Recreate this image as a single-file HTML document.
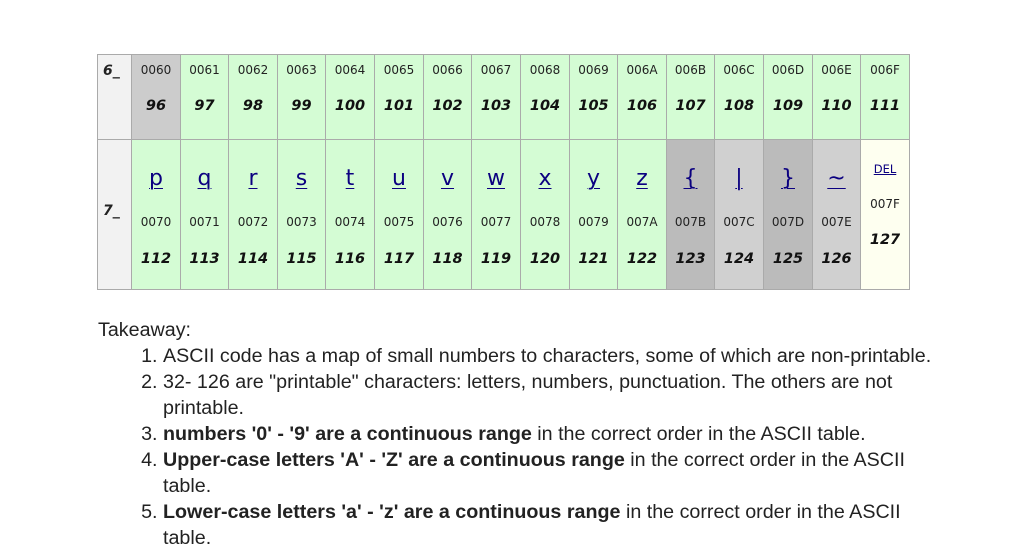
<!DOCTYPE html>
<html><head><meta charset="utf-8"><style>
body{margin:0;background:#fff;width:1033px;height:560px;overflow:hidden;position:relative;font-family:"Liberation Sans",Arial,sans-serif}
.cell{position:absolute;box-sizing:border-box;border:1px solid #aaa;background:#d4fcd4;text-align:center;font-family:"DejaVu Sans",Verdana,sans-serif;color:#222;display:flex;flex-direction:column;align-items:stretch}
.cell span{display:block}
.r1{top:54px;height:86px}
.r2{top:139px;height:151px}
.h{background:#f2f2f2;text-align:left;padding-left:5px;font-weight:bold;font-style:italic;font-size:14px;left:97px;width:35px}
.c{font-size:12px;line-height:16px}
.n{font-size:14.5px;font-weight:bold;font-style:oblique;line-height:18px;color:#111}
.r1 .c{margin-top:7px}
.r1 .n{margin-top:19px}
.l{margin-top:25px;line-height:28px;font-size:22px;color:#0b0080;text-decoration:underline;text-decoration-thickness:1px;text-underline-offset:3px}
.r2 .c{margin-top:21px}
.r2 .n{margin-top:20px}
.g1{background:#ccc}.g2{background:#bbb}.g3{background:#d0d0d0}.y{background:#fefff0}
.del{margin-top:22px;font-size:11.5px;line-height:14px;color:#0b0080;text-decoration:underline}
.txt{position:absolute;left:98px;top:317px;font-size:19.7px;line-height:26px;color:#222;width:930px;white-space:nowrap}
ol{margin:0;padding-left:65px}
</style></head><body>
<div class="cell r1 h" style="padding-top:8px">6_</div>
<div class="cell r2 h" style="padding-top:63px">7_</div>

<div class="cell r1 g1" style="left:131px;width:50px"><span class="c">0060</span><span class="n">96</span></div>
<div class="cell r1" style="left:180px;width:49px"><span class="c">0061</span><span class="n">97</span></div>
<div class="cell r1" style="left:228px;width:50px"><span class="c">0062</span><span class="n">98</span></div>
<div class="cell r1" style="left:277px;width:49px"><span class="c">0063</span><span class="n">99</span></div>
<div class="cell r1" style="left:325px;width:50px"><span class="c">0064</span><span class="n">100</span></div>
<div class="cell r1" style="left:374px;width:50px"><span class="c">0065</span><span class="n">101</span></div>
<div class="cell r1" style="left:423px;width:49px"><span class="c">0066</span><span class="n">102</span></div>
<div class="cell r1" style="left:471px;width:50px"><span class="c">0067</span><span class="n">103</span></div>
<div class="cell r1" style="left:520px;width:50px"><span class="c">0068</span><span class="n">104</span></div>
<div class="cell r1" style="left:569px;width:49px"><span class="c">0069</span><span class="n">105</span></div>
<div class="cell r1" style="left:617px;width:50px"><span class="c">006A</span><span class="n">106</span></div>
<div class="cell r1" style="left:666px;width:49px"><span class="c">006B</span><span class="n">107</span></div>
<div class="cell r1" style="left:714px;width:50px"><span class="c">006C</span><span class="n">108</span></div>
<div class="cell r1" style="left:763px;width:50px"><span class="c">006D</span><span class="n">109</span></div>
<div class="cell r1" style="left:812px;width:49px"><span class="c">006E</span><span class="n">110</span></div>
<div class="cell r1" style="left:860px;width:50px"><span class="c">006F</span><span class="n">111</span></div>

<div class="cell r2" style="left:131px;width:50px"><span class="l">p</span><span class="c">0070</span><span class="n">112</span></div>
<div class="cell r2" style="left:180px;width:49px"><span class="l">q</span><span class="c">0071</span><span class="n">113</span></div>
<div class="cell r2" style="left:228px;width:50px"><span class="l">r</span><span class="c">0072</span><span class="n">114</span></div>
<div class="cell r2" style="left:277px;width:49px"><span class="l">s</span><span class="c">0073</span><span class="n">115</span></div>
<div class="cell r2" style="left:325px;width:50px"><span class="l">t</span><span class="c">0074</span><span class="n">116</span></div>
<div class="cell r2" style="left:374px;width:50px"><span class="l">u</span><span class="c">0075</span><span class="n">117</span></div>
<div class="cell r2" style="left:423px;width:49px"><span class="l">v</span><span class="c">0076</span><span class="n">118</span></div>
<div class="cell r2" style="left:471px;width:50px"><span class="l">w</span><span class="c">0077</span><span class="n">119</span></div>
<div class="cell r2" style="left:520px;width:50px"><span class="l">x</span><span class="c">0078</span><span class="n">120</span></div>
<div class="cell r2" style="left:569px;width:49px"><span class="l">y</span><span class="c">0079</span><span class="n">121</span></div>
<div class="cell r2" style="left:617px;width:50px"><span class="l">z</span><span class="c">007A</span><span class="n">122</span></div>
<div class="cell r2 g2" style="left:666px;width:49px"><span class="l">{</span><span class="c">007B</span><span class="n">123</span></div>
<div class="cell r2 g3" style="left:714px;width:50px"><span class="l">|</span><span class="c">007C</span><span class="n">124</span></div>
<div class="cell r2 g2" style="left:763px;width:50px"><span class="l">}</span><span class="c">007D</span><span class="n">125</span></div>
<div class="cell r2 g3" style="left:812px;width:49px"><span class="l">~</span><span class="c">007E</span><span class="n">126</span></div>
<div class="cell r2 y" style="left:860px;width:50px"><span class="del">DEL</span><span class="c" style="margin-top:20px">007F</span><span class="n" style="margin-top:19px">127</span></div>

<div class="txt">Takeaway:
<ol>
<li>ASCII code has a map of small numbers to characters, some of which are non-printable.</li>
<li>32- 126 are "printable" characters: letters, numbers, punctuation. The others are not<br>printable.</li>
<li><b>numbers '0' - '9' are a continuous range</b> in the correct order in the ASCII table.</li>
<li><b>Upper-case letters 'A' - 'Z' are a continuous range</b> in the correct order in the ASCII<br>table.</li>
<li><b>Lower-case letters 'a' - 'z' are a continuous range</b> in the correct order in the ASCII<br>table.</li>
</ol></div>
</body></html>
